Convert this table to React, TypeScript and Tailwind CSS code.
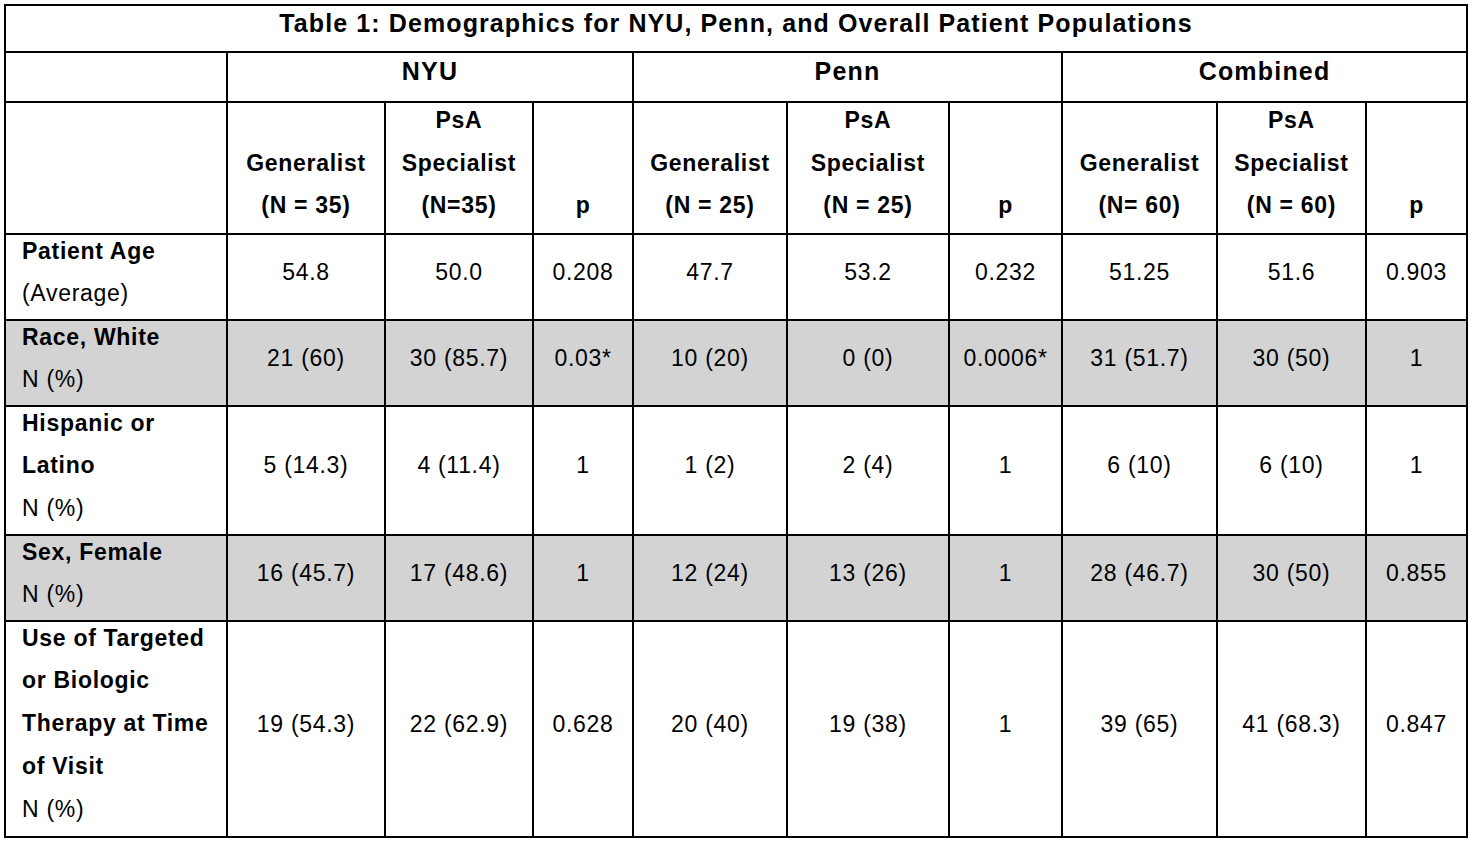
import React from "react";

const font = { fontFamily: '"Liberation Sans", Arial, sans-serif' };

type Row = { label: string[]; vals: string[]; gray: boolean; h: string };

const rows: Row[] = [
  { label: ["Patient Age", "(Average)"], vals: ["54.8", "50.0", "0.208", "47.7", "53.2", "0.232", "51.25", "51.6", "0.903"], gray: false, h: "h-[86px]" },
  { label: ["Race, White", "N (%)"], vals: ["21 (60)", "30 (85.7)", "0.03*", "10 (20)", "0 (0)", "0.0006*", "31 (51.7)", "30 (50)", "1"], gray: true, h: "h-[86px]" },
  { label: ["Hispanic or", "Latino", "N (%)"], vals: ["5 (14.3)", "4 (11.4)", "1", "1 (2)", "2 (4)", "1", "6 (10)", "6 (10)", "1"], gray: false, h: "h-[129px]" },
  { label: ["Sex, Female", "N (%)"], vals: ["16 (45.7)", "17 (48.6)", "1", "12 (24)", "13 (26)", "1", "28 (46.7)", "30 (50)", "0.855"], gray: true, h: "h-[86px]" },
  { label: ["Use of Targeted", "or Biologic", "Therapy at Time", "of Visit", "N (%)"], vals: ["19 (54.3)", "22 (62.9)", "0.628", "20 (40)", "19 (38)", "1", "39 (65)", "41 (68.3)", "0.847"], gray: false, h: "h-[216px]" },
];

function Label({ lines }: { lines: string[] }) {
  const last = lines[lines.length - 1];
  const hasPlain = last === "N (%)" || last === "(Average)";
  const boldLines = hasPlain ? lines.slice(0, -1) : lines;
  return (
    <div className="leading-[42.8px] mt-[-5px]">
      {boldLines.map((l) => (
        <div key={l} className="font-bold">{l}</div>
      ))}
      {hasPlain && <div>{last}</div>}
    </div>
  );
}

function SubHead({ a, b, c }: { a?: string; b: string; c: string }) {
  return (
    <th className="border-2 border-black align-bottom text-center font-bold p-0 pb-[6px] leading-[42.5px]">
      <div className="mt-[-4px]">
        {a && <div>{a}</div>}
        <div>{b || "\u00a0"}</div>
        <div>{c}</div>
      </div>
    </th>
  );
}

export default function App() {
  return (
    <div className="min-h-screen bg-white pt-[4px] pl-[4px] text-[23px] text-black tracking-[0.7px]" style={font}>
      <table className="border-collapse table-fixed w-[1464px]">
        <colgroup>
          <col className="w-[222px]" />
          <col className="w-[158px]" />
          <col className="w-[148px]" />
          <col className="w-[100px]" />
          <col className="w-[154px]" />
          <col className="w-[162px]" />
          <col className="w-[113px]" />
          <col className="w-[155px]" />
          <col className="w-[149px]" />
          <col className="w-[101px]" />
        </colgroup>
        <thead>
          <tr className="h-[47px]">
            <th colSpan={10} className="border-2 border-black text-center font-bold text-[25px] tracking-[1.1px] leading-[30px] p-0 align-middle pb-[12px]">
              Table 1: Demographics for NYU, Penn, and Overall Patient Populations
            </th>
          </tr>
          <tr className="h-[50px]">
            <th className="border-2 border-black p-0"></th>
            <th colSpan={3} className="border-2 border-black text-center font-bold text-[25px] tracking-[1.2px] leading-[30px] p-0 align-middle pb-[12px]">NYU</th>
            <th colSpan={3} className="border-2 border-black text-center font-bold text-[25px] tracking-[1.2px] leading-[30px] p-0 align-middle pb-[12px]">Penn</th>
            <th colSpan={3} className="border-2 border-black text-center font-bold text-[25px] tracking-[1.2px] leading-[30px] p-0 align-middle pb-[12px]">Combined</th>
          </tr>
          <tr className="h-[131px]">
            <th className="border-2 border-black p-0"></th>
            <SubHead b="Generalist" c="(N = 35)" />
            <SubHead a="PsA" b="Specialist" c="(N=35)" />
            <SubHead b="" c="p" />
            <SubHead b="Generalist" c="(N = 25)" />
            <SubHead a="PsA" b="Specialist" c="(N = 25)" />
            <SubHead b="" c="p" />
            <SubHead b="Generalist" c="(N= 60)" />
            <SubHead a="PsA" b="Specialist" c="(N = 60)" />
            <SubHead b="" c="p" />
          </tr>
        </thead>
        <tbody>
          {rows.map((r, i) => (
            <tr key={i} className={`${r.h} ${r.gray ? "bg-[#d3d3d3]" : "bg-white"}`}>
              <td className="border-2 border-black align-top pl-[16px] pr-0 py-0 text-left">
                <Label lines={r.label} />
              </td>
              {r.vals.map((v, j) => (
                <td key={j} className="border-2 border-black text-center align-middle p-0 pb-[10px] leading-[30px]">
                  {v}
                </td>
              ))}
            </tr>
          ))}
        </tbody>
      </table>
    </div>
  );
}
